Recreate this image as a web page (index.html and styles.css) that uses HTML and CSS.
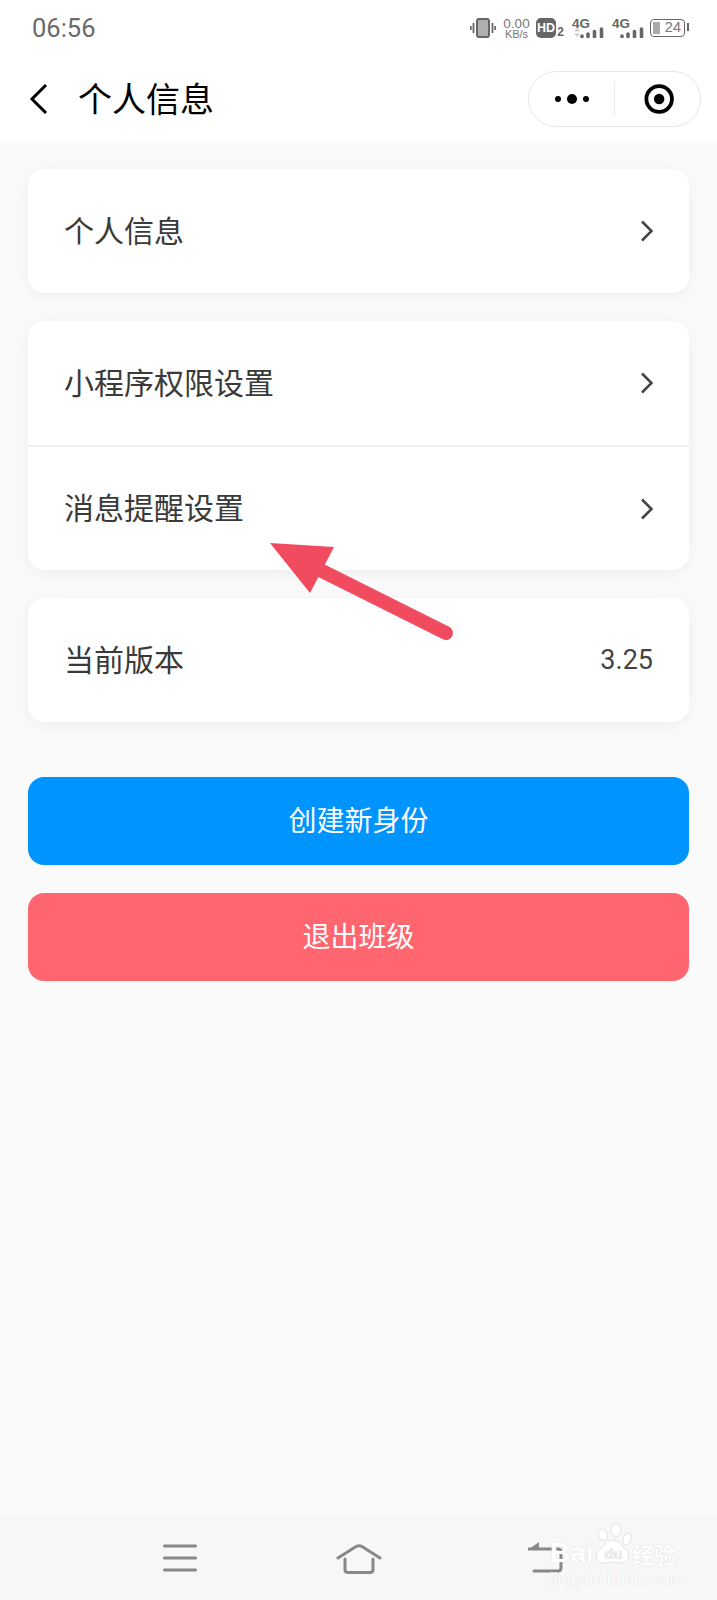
FILE: index.html
```html
<!DOCTYPE html>
<html lang="zh-CN">
<head>
  <meta charset="UTF-8">
  <meta name="viewport" content="width=device-width, initial-scale=1">
  <title>个人信息</title>
  <link rel="stylesheet" href="styles.css">
</head>
<body>
  <div class="page">
    <div class="top">
      <div class="status">
        <span class="time">06:56</span>
        <div class="status-icons">
          <svg class="ic-vibrate" width="26" height="20" viewBox="0 0 26 20">
            <rect x="7" y="1" width="12" height="18" rx="2" fill="#b0b0b0" stroke="#666" stroke-width="2"/>
            <path d="M3.500 5v10M0.800 8v4M22.500 5v10M25.200 8v4" stroke="#666" stroke-width="1.800" fill="none"/>
          </svg>
          <div class="speed"><span>0.00</span><span class="unit">KB/s</span></div>
          <div class="hd"><span class="hd-box">HD</span><span class="hd-num">2</span></div>
          <div class="net">
            <span class="net-label">4G</span>
            <svg class="updown" width="6" height="9" viewBox="0 0 6 9"><path d="M3 0 6 3.500H0zM3 9 6 5.500H0z" fill="#ccc"/></svg>
            <svg class="bars" width="24" height="11" viewBox="0 0 24 11"><path d="M2 9v0.500M8 7v2.500M14.500 4.500v5M21.500 2v7.500" stroke="#666" stroke-width="3.600" stroke-linecap="round"/></svg>
          </div>
          <div class="net">
            <span class="net-label">4G</span>
            <svg class="bars" width="24" height="11" viewBox="0 0 24 11"><path d="M2 9v0.500M8 7v2.500M14.500 4.500v5M21.500 2v7.500" stroke="#666" stroke-width="3.600" stroke-linecap="round"/></svg>
          </div>
          <div class="battery"><span class="battery-fill"></span><span class="battery-num">24</span></div>
        </div>
      </div>
      <div class="header">
        <svg class="back" width="20" height="32" viewBox="0 0 20 32"><path d="M17 2 3 16l14 14" fill="none" stroke="#000" stroke-width="3"/></svg>
        <h1>个人信息</h1>
        <div class="capsule">
          <div class="capsule-dots"><i></i><i class="big"></i><i></i></div>
          <span class="capsule-line"></span>
          <svg width="32" height="32" viewBox="0 0 32 32"><circle cx="16" cy="16" r="13.500" fill="none" stroke="#000" stroke-width="4"/><circle cx="16" cy="16" r="5.500" fill="#000"/></svg>
        </div>
      </div>
    </div>

    <div class="content">
      <div class="card">
        <div class="row">
          <span class="row-text">个人信息</span>
          <svg class="chev" width="14" height="22" viewBox="0 0 14 22"><path d="M2 1.500 11.500 11 2 20.500" fill="none" stroke="#444" stroke-width="2.500"/></svg>
        </div>
      </div>
      <div class="card">
        <div class="row">
          <span class="row-text">小程序权限设置</span>
          <svg class="chev" width="14" height="22" viewBox="0 0 14 22"><path d="M2 1.500 11.500 11 2 20.500" fill="none" stroke="#444" stroke-width="2.500"/></svg>
        </div>
        <div class="row row-line">
          <span class="row-text">消息提醒设置</span>
          <svg class="chev" width="14" height="22" viewBox="0 0 14 22"><path d="M2 1.500 11.500 11 2 20.500" fill="none" stroke="#444" stroke-width="2.500"/></svg>
        </div>
      </div>
      <div class="card">
        <div class="row">
          <span class="row-text">当前版本</span>
          <span class="version">3.25</span>
        </div>
      </div>
      <div class="btns">
        <div class="btn btn-blue">创建新身份</div>
        <div class="btn btn-red">退出班级</div>
      </div>
    </div>

    <div class="nav">
      <svg width="34" height="30" viewBox="0 0 34 30"><path d="M1.500 3h31M1.500 15h31M1.500 27h31" stroke="#888" stroke-width="3" stroke-linecap="round"/></svg>
      <svg class="nav-home" width="46" height="31" viewBox="0 0 46 31"><path d="M2 15 20 3.500q3-1.500 6 0L44 15M9 16v10.500q0 3 3 3h22q3 0 3-3V16" fill="none" stroke="#888" stroke-width="3" stroke-linecap="round"/></svg>
      <svg width="36" height="32" viewBox="0 0 36 32"><path d="M1 7h29q3 0 3 3v16q0 3-3 3H6" fill="none" stroke="#888" stroke-width="3" stroke-linecap="round"/><path d="M11 0v8H0z" fill="#888"/></svg>
    </div>

    <!-- red annotation arrow drawn on top of the screenshot -->
    <svg class="arrow" width="200" height="110" viewBox="0 0 200 110">
      <path d="M52 28 176 90" stroke="#f04b5e" stroke-width="14" stroke-linecap="round"/>
      <path d="M0 0 64 4 40 50z" fill="#f04b5e"/>
    </svg>

    <div class="mark">
      <svg class="paw" width="44" height="44" viewBox="0 0 44 44">
        <g fill="#fff" stroke="#e2e2e2" stroke-width="1">
          <ellipse cx="10" cy="12" rx="4.500" ry="6" transform="rotate(-20 10 12)"/>
          <ellipse cx="23" cy="7" rx="5" ry="6.500"/>
          <ellipse cx="34" cy="16" rx="4" ry="6" transform="rotate(15 34 16)"/>
          <path d="M20 17c6 0 8 6 13 9 5 4 3 14-5 14-3 0-5-1-8-1s-6 2-10 1C3 39 1 31 6 27c5-3 7-10 14-10z"/>
        </g>
      </svg>
      <div class="mark-top"><span class="mark-bai">Bai</span><span class="mark-du">du</span><span class="mark-cn">经验</span></div>
      <div class="mark-url">jingyan.baidu.com</div>
    </div>
  </div>
</body>
</html>
```

FILE: styles.css
```css
* {
  box-sizing: border-box;
}
html, body {
  margin: 0;
  padding: 0;
}
body {
  background: #fafafa;
  color: #333;
  font-family: "Noto Sans CJK SC", "Noto Sans", sans-serif;
}
.page {
  position: relative;
  width: 717px;
  height: 1600px;
  display: flex;
  flex-direction: column;
  overflow: hidden;
}
.top {
  background: #fff;
  height: 141px;
}
.status {
  height: 56px;
  padding: 0 32px 0 32px;
  display: flex;
  align-items: center;
  justify-content: space-between;
}
.time {
  font-family: Roboto, sans-serif;
  font-size: 25.500px;
  color: #6a6a6a;
}
.status-icons {
  display: flex;
  align-items: center;
  color: #666;
  font-family: "Liberation Sans", sans-serif;
}
.speed {
  display: flex;
  flex-direction: column;
  align-items: center;
  width: 25px;
  margin-left: 8px;
  font-size: 13.500px;
  line-height: 11px;
  color: #777;
}
.speed .unit {
  font-size: 11px;
  line-height: 10px;
}
.hd {
  display: flex;
  align-items: flex-end;
  margin-left: 7px;
}
.hd-box {
  width: 20px;
  height: 20px;
  border-radius: 5px;
  background: #666;
  color: #fff;
  font-size: 12.500px;
  font-weight: bold;
  line-height: 20px;
  text-align: center;
}
.hd-num {
  width: 8px;
  font-size: 12px;
  font-weight: bold;
  line-height: 11px;
  text-align: right;
}
.net {
  position: relative;
  width: 32px;
  height: 20px;
  margin-left: 8px;
}
.net-label {
  position: absolute;
  left: 0;
  top: -1px;
  font-size: 13.500px;
  line-height: 14px;
  font-weight: bold;
}
.net .bars {
  position: absolute;
  right: 0;
  bottom: 0;
}
.net .updown {
  position: absolute;
  left: 2px;
  bottom: 1px;
}
.battery {
  position: relative;
  width: 35px;
  height: 18px;
  margin-left: 6px;
  border: 1.500px solid #666;
  border-radius: 4px;
  font-size: 14.500px;
  line-height: 15px;
  text-align: right;
  padding-right: 3px;
  color: #777;
}
.battery::after {
  content: "";
  position: absolute;
  right: -5px;
  top: 3px;
  width: 2px;
  height: 8px;
  background: #666;
}
.battery-fill {
  position: absolute;
  left: 2px;
  top: 2px;
  bottom: 2px;
  width: 7px;
  background: #aaa;
}
.battery-num {
  position: relative;
}
.header {
  height: 85px;
  padding: 0 16px 0 29px;
  display: flex;
  align-items: center;
}
.header h1 {
  margin: 0 0 0 29px;
  font-size: 34px;
  font-weight: 400;
  color: #000;
  line-height: 46px;
  position: relative;
  top: -1px;
}
.capsule {
  margin-left: auto;
  width: 173px;
  height: 56px;
  border: 1px solid #e6e6e6;
  border-radius: 28px;
  display: flex;
  align-items: center;
  padding: 0 26px;
}
.capsule-dots {
  display: flex;
  align-items: center;
  gap: 6px;
  width: 62px;
}
.capsule-dots i {
  width: 6px;
  height: 6px;
  border-radius: 50%;
  background: #000;
}
.capsule-dots i.big {
  width: 10px;
  height: 10px;
}
.capsule-line {
  width: 1px;
  height: 34px;
  background: #e8e8e8;
  margin-right: 29px;
}
.content {
  flex: 1;
  padding: 28px 28px 0;
  display: flex;
  flex-direction: column;
  gap: 28px;
}
.card {
  background: #fff;
  border-radius: 16px;
  box-shadow: 0 3px 14px rgba(0, 0, 0, 0.05);
}
.row {
  height: 124px;
  padding: 0 36px;
  display: flex;
  align-items: center;
  justify-content: space-between;
  font-size: 30px;
  color: #3a3a3a;
}
.row-text {
  margin-bottom: 4px;
}
.row-line {
  height: 125px;
  border-top: 2px solid #f0f0f0;
}
.row-line .row-text {
  margin-bottom: 6px;
}
.chev {
  margin-right: -1px;
}
.version {
  font-family: Roboto, sans-serif;
  font-size: 27px;
  color: #444;
}
.btns {
  margin-top: 27px;
  display: flex;
  flex-direction: column;
  gap: 28px;
}
.btn {
  height: 88px;
  border-radius: 16px;
  color: #fff;
  font-size: 28px;
  line-height: 85px;
  text-align: center;
}
.btn-blue {
  background: #0094ff;
}
.btn-red {
  background: #ff6670;
}
.nav {
  height: 84px;
  background: #f7f7f7;
  padding: 0 153px 0 163px;
  display: flex;
  align-items: center;
  justify-content: space-between;
}
.nav-home {
  margin-right: 8px;
}
.arrow {
  position: absolute;
  left: 270px;
  top: 543px;
}
.mark {
  position: absolute;
  left: 550px;
  top: 1523px;
  width: 130px;
  color: #fff;
  font-family: "Liberation Sans", sans-serif;
  text-shadow: 0 0 1px #ccc;
}
.paw {
  position: absolute;
  left: 43px;
  top: 0;
}
.mark-top {
  position: relative;
  display: flex;
  align-items: center;
  margin-top: 17px;
  height: 26px;
}
.mark-bai {
  width: 45px;
  font-size: 28px;
  font-weight: bold;
}
.mark-du {
  width: 37px;
  font-size: 15px;
  font-weight: bold;
  text-align: center;
  color: #eee;
}
.mark-cn {
  font-family: "Noto Sans CJK SC", sans-serif;
  font-size: 22px;
  font-weight: bold;
}
.mark-url {
  position: relative;
  margin-top: 3px;
  font-size: 16.500px;
  line-height: 18px;
  white-space: nowrap;
}
```
